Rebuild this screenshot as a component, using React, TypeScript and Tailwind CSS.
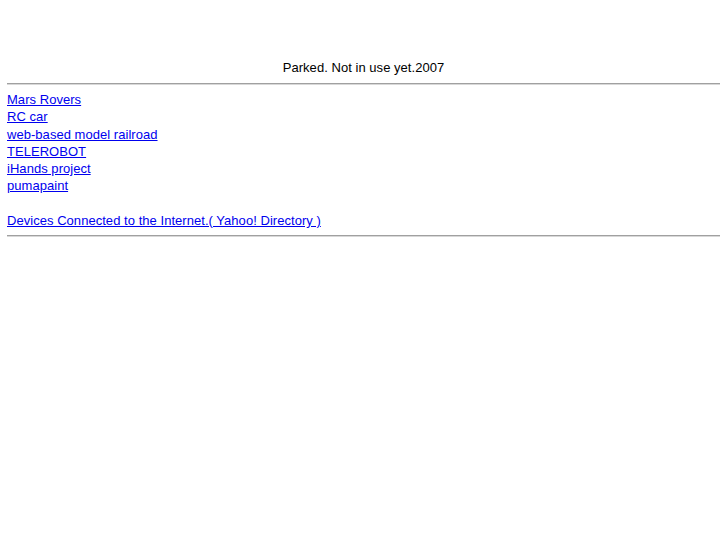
export default function App() {
  const links = [
    "Mars Rovers",
    "RC car",
    "web-based model railroad",
    "TELEROBOT",
    "iHands project",
    "pumapaint",
  ];
  return (
    <div className="min-h-[545px] bg-white px-[7px] pt-[59px] text-[13px] leading-[17.3px] tracking-[0.04px] text-black" style={{ fontFamily: '"Liberation Sans", Arial, sans-serif' }}>
      <div className="text-center leading-[17px]">Parked. Not in use yet.2007</div>
      <div className="mt-[7px] mb-[6px] h-[2px] border-t border-b border-t-[#a0a0a0] border-b-[#d8d8d8]" />
      <div className="flex flex-col items-start">
        {links.map((l) => (
          <a key={l} href="#" className="text-[#0000ee] underline">
            {l}
          </a>
        ))}
        <div className="h-[17.3px]" />
        <a href="#" className="text-[#0000ee] underline">
          Devices Connected to the Internet.( Yahoo! Directory )
        </a>
      </div>
      <div className="mt-[5.6px] h-[2px] border-t border-b border-t-[#a0a0a0] border-b-[#d8d8d8]" />
    </div>
  );
}
